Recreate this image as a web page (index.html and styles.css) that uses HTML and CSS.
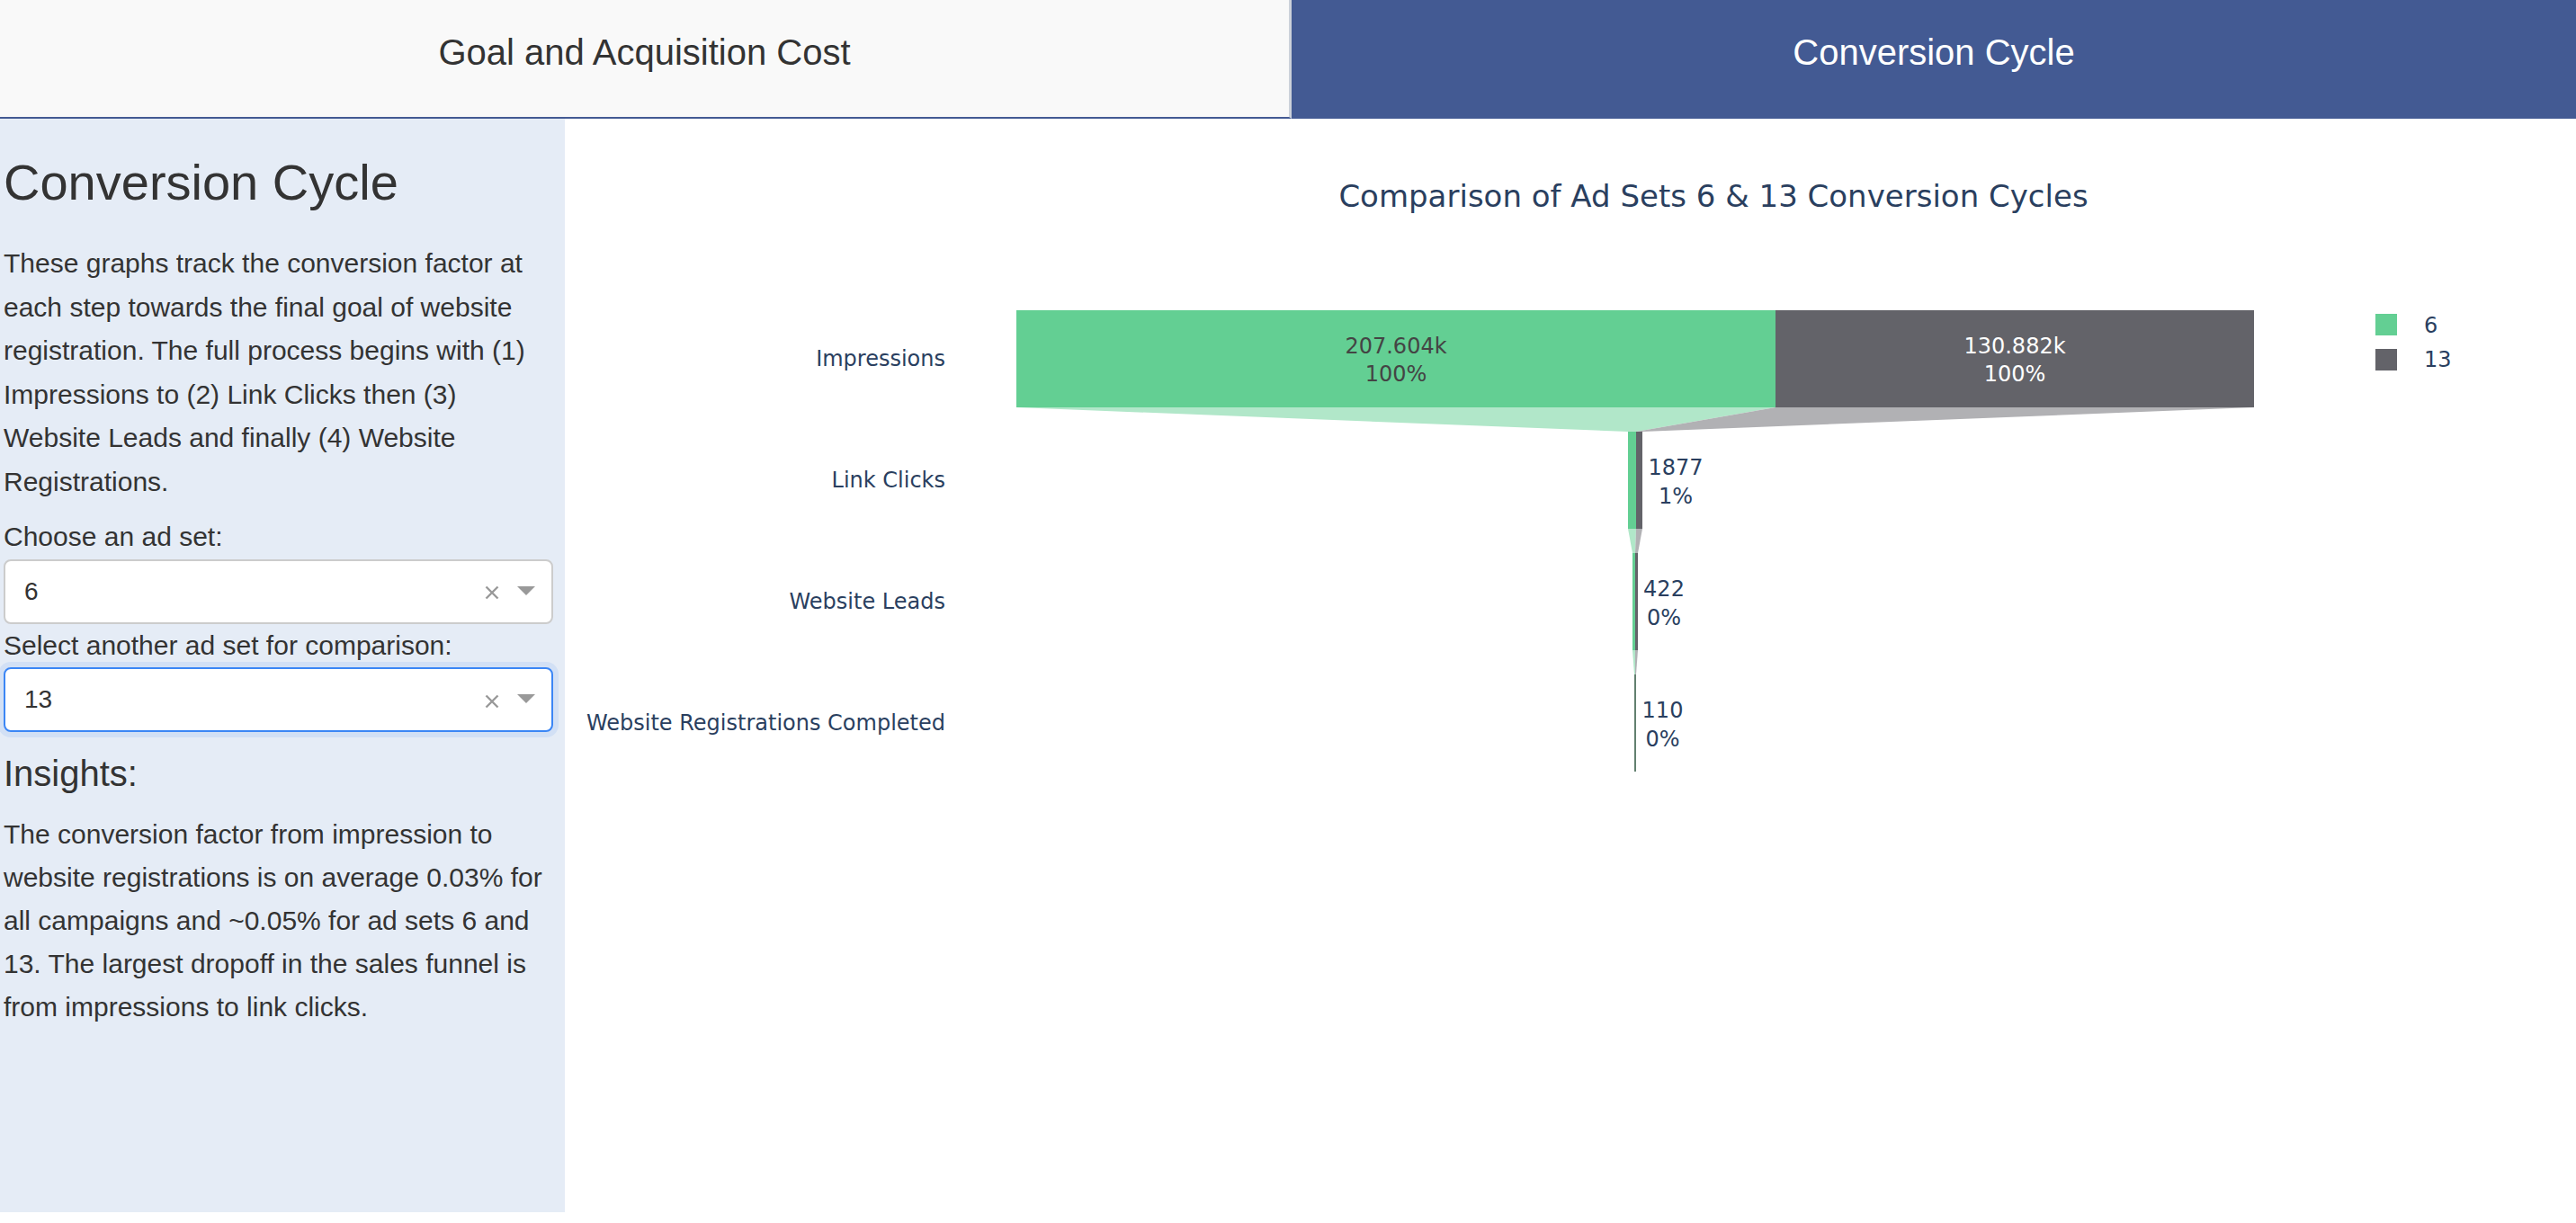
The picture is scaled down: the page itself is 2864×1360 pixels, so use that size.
FILE: index.html
```html
<!DOCTYPE html>
<html lang="en">
<head>
<meta charset="utf-8">
<title>Conversion Cycle</title>
<link rel="stylesheet" href="styles.css">
</head>
<body>
<header class="tabs">
  <div class="tab">Goal and Acquisition Cost</div>
  <div class="tab tab--selected">Conversion Cycle</div>
</header>
<main class="layout">
  <aside class="sidebar">
    <h2 class="side-title">Conversion Cycle</h2>
    <p class="side-text">These graphs track the conversion factor at each step towards the final goal of website registration. The full process begins with (1) Impressions to (2) Link Clicks then (3) Website Leads and finally (4) Website Registrations.</p>
    <label class="field-label">Choose an ad set:</label>
    <div class="select">
      <span class="select-value">6</span>
      <span class="select-clear"><svg width="16" height="16" viewBox="0 0 16 16"><path d="M1.5 1.5L14.5 14.5M14.5 1.5L1.5 14.5" stroke="#999" stroke-width="2.4" fill="none"/></svg></span>
      <span class="select-arrow"></span>
    </div>
    <label class="field-label">Select another ad set for comparison:</label>
    <div class="select select--focused">
      <span class="select-value">13</span>
      <span class="select-clear"><svg width="16" height="16" viewBox="0 0 16 16"><path d="M1.5 1.5L14.5 14.5M14.5 1.5L1.5 14.5" stroke="#999" stroke-width="2.4" fill="none"/></svg></span>
      <span class="select-arrow"></span>
    </div>
    <h3 class="insights-title">Insights:</h3>
    <p class="side-text side-text--insights">The conversion factor from impression to website registrations is on average 0.03% for all campaigns and ~0.05% for ad sets 6 and 13. The largest dropoff in the sales funnel is from impressions to link clicks.</p>
  </aside>
  <section class="chart">
    <svg class="funnel" width="2236" height="1216" viewBox="628 132 2236 1216" xmlns="http://www.w3.org/2000/svg">
      <text class="chart-title" x="1905" y="230" text-anchor="middle">Comparison of Ad Sets 6 &amp; 13 Conversion Cycles</text>

      <g class="cat-labels" text-anchor="end">
        <text x="1051" y="407">Impressions</text>
        <text x="1051" y="542">Link Clicks</text>
        <text x="1051" y="677">Website Leads</text>
        <text x="1051" y="812">Website Registrations Completed</text>
      </g>

      <!-- connectors -->
      <polygon class="conn-green" points="1130,453 1974,453 1819,480 1810,480"/>
      <polygon class="conn-gray" points="1974,453 2506,453 1826,480 1819,480"/>
      <polygon class="conn-green" points="1810,588 1819,588 1818,615 1815,615"/>
      <polygon class="conn-gray" points="1819,588 1826,588 1821,615 1818,615"/>
      <polygon class="conn-green" points="1815,723 1818,723 1818,750 1817,750"/>
      <polygon class="conn-gray" points="1818,723 1821,723 1819,750 1818,750"/>

      <!-- bars -->
      <rect class="bar-green" x="1130" y="345" width="844" height="108"/>
      <rect class="bar-gray" x="1974" y="345" width="532" height="108"/>
      <rect class="bar-green" x="1810" y="480" width="9" height="108"/>
      <rect class="bar-gray" x="1819" y="480" width="7" height="108"/>
      <rect class="bar-green" x="1815" y="615" width="3" height="108"/>
      <rect class="bar-gray" x="1818" y="615" width="3" height="108"/>
      <rect class="bar-reg" x="1817" y="750" width="2" height="108"/>

      <!-- values -->
      <g class="val" text-anchor="middle">
        <text class="val-dark" x="1552" y="393">207.604k</text>
        <text class="val-dark" x="1552" y="424">100%</text>
        <text class="val-light" x="2240" y="393">130.882k</text>
        <text class="val-light" x="2240" y="424">100%</text>
        <text class="val-out" x="1863" y="528">1877</text>
        <text class="val-out" x="1863" y="560">1%</text>
        <text class="val-out" x="1850" y="663">422</text>
        <text class="val-out" x="1850" y="695">0%</text>
        <text class="val-out" x="1848.5" y="798">110</text>
        <text class="val-out" x="1848.5" y="830">0%</text>
      </g>

      <!-- legend -->
      <rect class="bar-green" x="2641" y="349" width="24" height="24"/>
      <rect class="bar-gray" x="2641" y="388" width="24" height="24"/>
      <text class="legend-text" x="2695" y="370">6</text>
      <text class="legend-text" x="2695" y="408">13</text>
    </svg>
  </section>
</main>
</body>
</html>
```

FILE: styles.css
```css
html, body {
  margin: 0;
  padding: 0;
  background: #ffffff;
}

body {
  font-family: "Liberation Sans", Arial, Helvetica, sans-serif;
  color: #333333;
}

.tabs {
  display: flex;
  height: 132px;
}

.tab {
  box-sizing: border-box;
  height: 132px;
  padding-top: 35px;
  font-size: 40px;
  line-height: 46px;
  text-align: center;
  color: #333333;
}

.tab:first-child {
  flex: 0 0 1436px;
  background: #f9f9f9;
  border-bottom: 2px solid #435a93;
  border-right: 3px solid #ccd1da;
}

.tab--selected {
  flex: 1 1 auto;
  background: #435a93;
  color: #ffffff;
}

.layout {
  display: flex;
  align-items: flex-start;
}

.sidebar {
  flex: 0 0 628px;
  box-sizing: border-box;
  height: 1216px;
  padding: 37px 13px 0 4px;
  background: #e5ecf6;
}

.side-title {
  margin: 0 0 33px;
  font-size: 56px;
  line-height: 67px;
  font-weight: 400;
}

.side-text {
  margin: 0 0 13px;
  font-size: 30px;
  line-height: 48.5px;
}

.side-text--insights {
  line-height: 48px;
}

.field-label {
  display: block;
  font-size: 30px;
  line-height: 48.5px;
}

.select {
  box-sizing: border-box;
  height: 72px;
  display: flex;
  align-items: center;
  background: #ffffff;
  border: 2px solid #cccccc;
  border-radius: 8px;
}

.select--focused {
  border-color: #3b86f5;
  box-shadow: 0 0 0 6px #d2e0f5;
}

.select-value {
  flex: 1 1 auto;
  padding-left: 21px;
  font-size: 28px;
  color: #333333;
}

.select-clear {
  display: flex;
  margin-top: 3px;
  margin-right: 20px;
}

.select-arrow {
  width: 0;
  height: 0;
  margin-right: 18px;
  margin-top: -2px;
  border-style: solid;
  border-width: 10px 10px 0;
  border-color: #999999 transparent transparent;
}

.insights-title {
  margin: 22px 0 20px;
  font-size: 40px;
  line-height: 48px;
  font-weight: 400;
}

.chart {
  flex: 1 1 auto;
}

.funnel {
  display: block;
  font-family: "DejaVu Sans", Verdana, sans-serif;
}

.chart-title {
  font-size: 34px;
  fill: #2a3f5f;
}

.cat-labels text {
  font-size: 24px;
  fill: #2a3f5f;
}

.bar-green { fill: #63cf93; }
.bar-gray { fill: #636369; }
.bar-reg { fill: #62806f; }
.conn-green { fill: #b1e7c9; }
.conn-gray { fill: #b1b1b4; }

.val text { font-size: 24px; }
.val-dark { fill: #444444; }
.val-light { fill: #ffffff; }
.val-out { fill: #2a3f5f; }

.legend-text {
  font-size: 24px;
  fill: #2a3f5f;
}
```
